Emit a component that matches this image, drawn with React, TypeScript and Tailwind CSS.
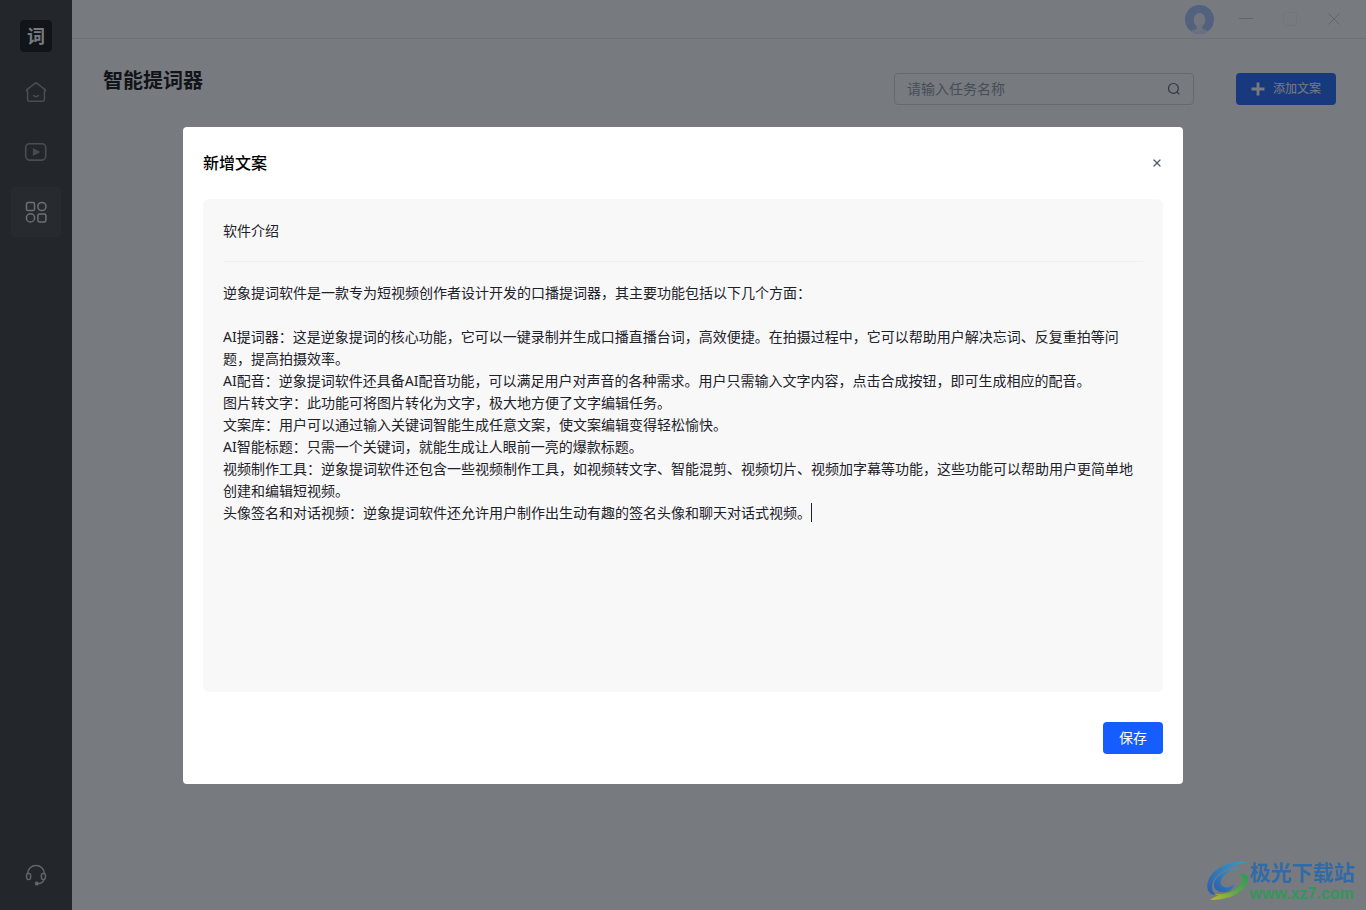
import React, { useState } from 'react';
import { X } from 'lucide-react';

const INTRO = `逆象提词软件是一款专为短视频创作者设计开发的口播提词器，其主要功能包括以下几个方面：

AI提词器：这是逆象提词的核心功能，它可以一键录制并生成口播直播台词，高效便捷。在拍摄过程中，它可以帮助用户解决忘词、反复重拍等问题，提高拍摄效率。
AI配音：逆象提词软件还具备AI配音功能，可以满足用户对声音的各种需求。用户只需输入文字内容，点击合成按钮，即可生成相应的配音。
图片转文字：此功能可将图片转化为文字，极大地方便了文字编辑任务。
文案库：用户可以通过输入关键词智能生成任意文案，使文案编辑变得轻松愉快。
AI智能标题：只需一个关键词，就能生成让人眼前一亮的爆款标题。
视频制作工具：逆象提词软件还包含一些视频制作工具，如视频转文字、智能混剪、视频切片、视频加字幕等功能，这些功能可以帮助用户更简单地创建和编辑短视频。
头像签名和对话视频：逆象提词软件还允许用户制作出生动有趣的签名头像和聊天对话式视频。`;

function HomeIcon() {
  return (
    <svg width="24" height="24" viewBox="0 0 24 24" fill="none" stroke="currentColor" strokeWidth="1.5" strokeLinejoin="round" strokeLinecap="round">
      <path d="M2.6 9.8 12 2.6l9.4 7.2v1.2h-1v8.8a1.4 1.4 0 0 1-1.4 1.4H5a1.4 1.4 0 0 1-1.4-1.4V11h-1z" />
      <path d="M9.6 15.6c1.2 1.4 3.6 1.4 4.8 0" />
    </svg>
  );
}

function VideoIcon() {
  return (
    <svg width="24" height="24" viewBox="0 0 24 24" fill="none" stroke="currentColor" strokeWidth="1.6">
      <rect x="1.7" y="3.7" width="20" height="16.4" rx="3.8" />
      <path d="M9.4 8.8v6.4l6-3.2z" fill="currentColor" strokeWidth="1" strokeLinejoin="round" />
    </svg>
  );
}

function AppsIcon() {
  return (
    <svg width="24" height="24" viewBox="0 0 24 24" fill="none" stroke="currentColor" strokeWidth="1.5">
      <rect x="2.5" y="2.5" width="8" height="8" rx="1.6" />
      <circle cx="17.9" cy="6.5" r="4.1" />
      <circle cx="6.5" cy="17.9" r="4.1" />
      <rect x="13.9" y="13.9" width="8" height="8" rx="1.6" />
    </svg>
  );
}

function HeadsetIcon() {
  return (
    <svg width="24" height="24" viewBox="0 0 24 24" fill="none" stroke="currentColor" strokeWidth="1.5" strokeLinecap="round">
      <path d="M3.8 10.6C3.8 5.8 7.4 2.6 12 2.6s8.2 3.2 8.2 8" />
      <rect x="2.6" y="10.4" width="4" height="6" rx="1.6" />
      <rect x="17.4" y="10.4" width="4" height="6" rx="1.6" />
      <path d="M20 16.6c-.8 2.6-3 4-6.4 4.2" />
      <circle cx="12.8" cy="20.6" r="1.3" fill="currentColor" />
    </svg>
  );
}

function Avatar() {
  return (
    <svg width="30" height="30" viewBox="0 0 30 30">
      <defs>
        <clipPath id="avatar-clip">
          <circle cx="15.5" cy="15.5" r="14.5" />
        </clipPath>
      </defs>
      <g clipPath="url(#avatar-clip)">
        <rect width="30" height="30" fill="#a4c0fa" />
        <ellipse cx="15.5" cy="33" rx="13" ry="8" fill="#dfe7f8" />
        <ellipse cx="15.5" cy="16" rx="5.8" ry="7" fill="#f0f4ff" />
        <rect x="12.5" y="20" width="6" height="7" fill="#e8eefb" />
      </g>
    </svg>
  );
}

function Watermark() {
  return (
    <div className="pointer-events-none fixed right-[11px] bottom-2 z-20 flex items-center">
      <svg width="44" height="44" viewBox="0 0 44 44">
        <defs>
          <linearGradient id="wm-blue" x1="1" y1="0" x2="0" y2="1">
            <stop offset="0" stopColor="#3a9cc4" />
            <stop offset="1" stopColor="#2c5cab" />
          </linearGradient>
          <linearGradient id="wm-green" x1="1" y1="0" x2="0" y2="1">
            <stop offset="0" stopColor="#2c9a55" />
            <stop offset="0.5" stopColor="#5aa846" />
            <stop offset="1" stopColor="#c2b92f" />
          </linearGradient>
        </defs>
        <path d="M42 4C30 2 17 6 9 13 2 19 0 27 2 32c1 3 4 5 8 5-5-4-5-11-1-17C15 13 27 7 42 4z" fill="url(#wm-blue)" />
        <path d="M34 10C22 10 10 17 8 25c-1 6 4 10 12 9 5-1 8-4 8-8-3 3-7 4-10 3-5-2-4-7 0-11 4-4 9-6 16-8z" fill="url(#wm-blue)" />
        <path d="M33 16c10-2 12 7 4 15-7 7-18 11-33 11 3-2 6-4 9-5-2 0-3 0-5-1 12 1 22-3 26-9 3-4 3-8-1-11z" fill="url(#wm-green)" />
      </svg>
      <div className="flex flex-col">
        <span className="text-[21px] leading-7 font-bold text-[#316aa8]">极光下载站</span>
        <span className="font-['Liberation_Sans',sans-serif] text-[16px] leading-4 font-bold text-[#30985a]">www.xz7.com</span>
      </div>
    </div>
  );
}

export default function App() {
  const [open, setOpen] = useState(true);
  const [title, setTitle] = useState('软件介绍');
  const [content, setContent] = useState(INTRO);

  return (
    <div className="flex min-h-screen bg-white font-['Noto_Sans','Noto_Sans_CJK_SC',sans-serif] text-[#1d2129]">
      <aside className="flex w-[72px] shrink-0 flex-col items-center bg-[#2f3030] pt-5 pb-[23px]">
        <div className="flex size-8 items-center justify-center rounded bg-black text-[18px] leading-none font-bold text-white">词</div>
        <nav className="mt-[15px] flex flex-1 flex-col items-center gap-2.5 text-[#8c8d90]">
          <button aria-label="首页" className="flex size-[50px] items-center justify-center rounded">
            <HomeIcon />
          </button>
          <button aria-label="视频" className="flex size-[50px] items-center justify-center rounded">
            <VideoIcon />
          </button>
          <button aria-label="工具" className="flex size-[50px] items-center justify-center rounded bg-[#373838] text-[#e4e4e6]">
            <AppsIcon />
          </button>
        </nav>
        <button aria-label="客服" className="text-[#c9cacc]">
          <HeadsetIcon />
        </button>
      </aside>

      <div className="flex min-w-0 flex-1 flex-col">
        <header className="flex h-[39px] items-center justify-end border-b border-[#e9eaee] pr-[25px] text-[#c9cbd0]">
          <Avatar />
          <button aria-label="最小化" className="ml-[25px]">
            <svg width="14" height="14" viewBox="0 0 14 14" stroke="currentColor" fill="none">
              <path d="M0 6.5h14" />
            </svg>
          </button>
          <button aria-label="最大化" className="ml-[30px] text-[#f3f3f5]">
            <svg width="14" height="14" viewBox="0 0 14 14" stroke="currentColor" fill="none">
              <rect x="0.5" y="0.5" width="13" height="13" rx="2" />
            </svg>
          </button>
          <button aria-label="关闭窗口" className="ml-[30px]">
            <svg width="14" height="14" viewBox="0 0 14 14" stroke="currentColor" fill="none">
              <path d="m1.5 1.5 11 11m0-11-11 11" />
            </svg>
          </button>
        </header>

        <main className="flex items-start justify-between pt-7 pr-[30px] pl-[31px]">
          <h1 className="text-[20px] leading-7 font-bold text-black">智能提词器</h1>
          <div className="flex items-center gap-[42px] pt-1.5">
            <div className="flex h-8 w-[300px] items-center rounded border border-[#d3d6dc] px-3">
              <input
                aria-label="任务名称"
                placeholder="请输入任务名称"
                className="min-w-0 flex-1 bg-transparent text-sm outline-none placeholder:text-[#86909c]"
              />
              <svg width="14" height="14" viewBox="0 0 14 14" fill="none" stroke="#4e5969" strokeWidth="1.2">
                <circle cx="6.4" cy="6.4" r="4.9" />
                <path d="m9.9 9.9 2.4 2.4" />
              </svg>
            </div>
            <button className="flex h-8 w-[100px] items-center justify-center gap-2 rounded bg-[#165dff] text-xs text-white">
              <svg width="14" height="14" viewBox="0 0 14 14" fill="none" stroke="currentColor" strokeWidth="2.8">
                <path d="M7 .5v13M.5 7h13" />
              </svg>
              添加文案
            </button>
          </div>
        </main>
      </div>

      {open && (
        <div className="fixed inset-0 z-10 flex items-center justify-center bg-[#1d2129]/60 p-4">
          <div role="dialog" aria-labelledby="dialog-title" className="w-full max-w-[1000px] rounded bg-white px-5 pb-[30px]">
            <div className="flex h-[72px] items-center justify-between">
              <h2 id="dialog-title" className="text-base font-medium text-black">新增文案</h2>
              <button aria-label="关闭" onClick={() => setOpen(false)} className="text-[#4e5969]">
                <X size={12} strokeWidth={2.4} />
              </button>
            </div>

            <div className="rounded-md bg-[#f8f8f8] px-5 pb-5">
              <div className="border-b border-[#f0f0f0]">
                <input
                  aria-label="标题"
                  value={title}
                  onChange={(e) => setTitle(e.target.value)}
                  className="h-[62px] w-full bg-transparent text-sm outline-none"
                />
              </div>
              <div className="relative pt-5">
                <textarea
                  aria-label="文案内容"
                  value={content}
                  onChange={(e) => setContent(e.target.value)}
                  className="block h-[390px] w-full resize-none bg-transparent text-sm leading-[22px] caret-transparent outline-none"
                />
                <span className="absolute top-[241px] left-[588px] h-[19px] w-px bg-[#1d2129]" />
              </div>
            </div>

            <div className="mt-[30px] flex justify-end">
              <button className="h-8 w-[60px] rounded bg-[#165dff] text-sm text-white">保存</button>
            </div>
          </div>
        </div>
      )}

      <Watermark />
    </div>
  );
}
